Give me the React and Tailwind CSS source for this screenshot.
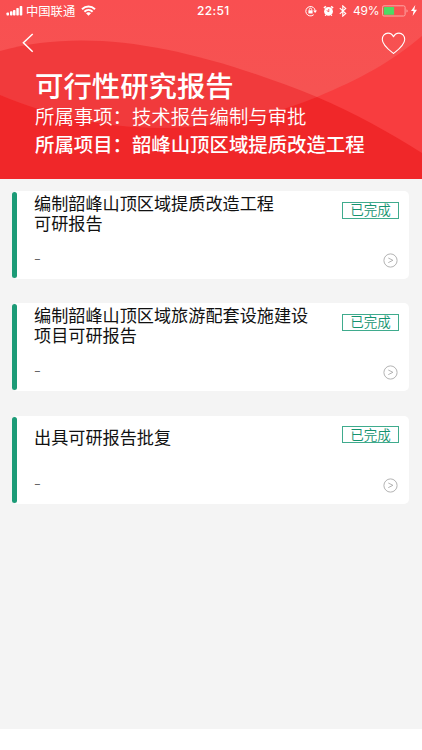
const tasks = [
  { id: 1, title: '编制韶峰山顶区域提质改造工程\n可研报告' },
  { id: 2, title: '编制韶峰山顶区域旅游配套设施建设\n项目可研报告' },
  { id: 3, title: '出具可研报告批复' },
];

function HeaderWaves() {
  return (
    <svg className="absolute inset-0 h-full w-full" viewBox="0 0 422 179" preserveAspectRatio="none" aria-hidden="true">
      <defs>
        <linearGradient id="sky" x1="0" y1="0" x2="0" y2="1">
          <stop offset="0" stopColor="#f94f51" />
          <stop offset="0.5" stopColor="#f65352" />
        </linearGradient>
        <clipPath id="hillClip">
          <path d="M0 51C95 25 200 50 317 97C355 113 390 133 422 153V179H0Z" />
        </clipPath>
      </defs>
      <rect width="422" height="179" fill="url(#sky)" />
      <path d="M0 51C95 25 200 50 317 97C355 113 390 133 422 153V179H0Z" fill="#f13a3c" />
      <path d="M0 95C105 139 215 138 317 97C360 79 393 61 422 36V179H0Z" fill="#f83d3f" />
      <path d="M0 95C105 139 215 138 317 97C360 79 393 61 422 36V179H0Z" fill="#f02729" clipPath="url(#hillClip)" />
    </svg>
  );
}

function StatusBar() {
  return (
    <div className="relative flex h-[22px] items-center justify-between pl-[6px] pr-[5px] text-white">
      <div className="flex items-center">
        <svg width="17" height="10" viewBox="0 0 17 10" fill="currentColor">
          <rect x="0.5" y="6.5" width="2.5" height="3" rx=".7" />
          <rect x="4" y="5.2" width="2.5" height="4.3" rx=".7" />
          <rect x="7" y="4" width="2.5" height="5.5" rx=".7" />
          <rect x="10.3" y="2" width="2.5" height="7.5" rx=".7" />
          <rect x="13.7" y="0" width="2.6" height="9.5" rx=".7" />
        </svg>
        <span className="ml-[3px] text-[12.3px] leading-[22px]">中国联通</span>
        <svg className="-mt-px ml-[6px]" width="15" height="11" viewBox="0 0 15 11" fill="none" stroke="currentColor" strokeWidth="2">
          <path d="M1 4.2C4.8.5 10.2.5 14 4.2" />
          <path d="M3.4 6.7C5.8 4.4 9.2 4.4 11.6 6.7" />
          <path d="M7.5 10.7L5 8.2C6.4 6.9 8.6 6.9 10 8.2Z" fill="currentColor" stroke="none" />
        </svg>
      </div>
      <span className="absolute left-[197px] font-['Inter','Liberation_Sans',sans-serif] text-[12px] font-medium leading-[22px] tracking-[0.35px]">22:51</span>
      <div className="-mt-px flex items-center">
        <svg className="mr-[5px]" width="12" height="12" viewBox="0 0 12 12" fill="none" stroke="currentColor">
          <path d="M8.7 9.7A4.7 4.7 0 1 1 10.2 5.8" strokeWidth="1" />
          <path d="M8.2 5.4H12L10.1 8Z" fill="currentColor" stroke="none" />
          <rect x="3.4" y="5.3" width="4.2" height="3.2" fill="currentColor" stroke="none" />
          <path d="M4.3 5.5V4.4A1.2 1.2 0 0 1 6.7 4.4V5.5" strokeWidth=".9" />
        </svg>
        <svg className="ml-[1px]" width="11" height="12" viewBox="0 0 11 12" fill="none" stroke="currentColor">
          <circle cx="5.5" cy="6.4" r="4.4" fill="currentColor" stroke="none" />
          <path d="M.9 3L2.9 1.3M10.1 3L8.1 1.3" strokeWidth="1.6" />
          <path d="M2.8 10L2 11M8.2 10L9 11" strokeWidth="1" />
          <path d="M5.8 3.9V6.7L3.7 5.6" stroke="#f65052" strokeWidth=".9" />
        </svg>
        <svg className="ml-[5px]" width="8" height="12" viewBox="0 0 8 12" fill="none" stroke="currentColor" strokeWidth="1.15">
          <path d="M.8 3.2L6.7 8.6L3.8 11.1V.9L6.7 3.4L.8 8.8" />
        </svg>
        <span className="ml-[6px] w-[26px] whitespace-nowrap font-['Inter','Liberation_Sans',sans-serif] text-[12px] leading-[22px] tracking-[-0.2px]">49%</span>
        <svg className="ml-[2.5px]" width="27" height="12" viewBox="0 0 27 12">
          <rect x=".5" y=".8" width="22.6" height="10.2" rx="1.5" fill="none" stroke="#fca7a5" />
          <rect x="1.8" y="2.1" width="10.3" height="7.6" rx=".5" fill="#4dda64" />
          <path d="M24.5 4.2C26 4.6 26 7.2 24.5 7.6Z" fill="#fca7a5" />
        </svg>
        <svg className="ml-[2.5px]" width="6" height="11" viewBox="0 0 6 11" fill="currentColor">
          <path d="M4.3 0L0 6H2.6L1.6 11L6 4.7H3.3Z" />
        </svg>
      </div>
    </div>
  );
}

function TaskCard({ title }) {
  return (
    <article className="flex h-[88px] rounded-[5px] bg-white">
      <div className="my-px ml-[0.4px] w-[4.6px] shrink-0 rounded-full bg-[#1c9b77]" />
      <div className="flex min-w-0 flex-1 flex-col pl-[17px]">
        <div className="flex h-[43px] items-center">
          <h2 className="whitespace-pre text-[17.15px] font-normal leading-[20px] text-[#111]">{title}</h2>
        </div>
        <span className="mt-[13px] w-[4px] origin-left scale-x-[1.4] text-[14px] leading-[20px] text-[#666]">-</span>
      </div>
      <div className="mr-[10px] flex w-[58px] shrink-0 flex-col items-end pt-[10.6px]">
        <span className="flex h-[17px] w-[57px] items-center justify-center border border-[#3fab8d] pb-px text-[13.5px] font-[350] leading-[15px] text-[#159370]">已完成</span>
        <svg className="mr-px mt-[34.4px]" width="15" height="15" viewBox="0 0 15 15" fill="none" stroke="#aaa">
          <circle cx="7.5" cy="7.5" r="6.6" strokeWidth=".9" />
          <path d="M5.3 5L9.9 7.3L5.3 9.6" strokeWidth=".9" />
        </svg>
      </div>
    </article>
  );
}

export default function App() {
  return (
    <div className="h-[750px] w-[422px] overflow-hidden bg-white font-['Noto_Sans_CJK_SC',sans-serif]">
      <div className="h-[729px] bg-[#f4f4f4]">
        <header className="relative h-[179px]">
          <HeaderWaves />
          <StatusBar />
          <nav className="relative flex h-[44px] items-start justify-between pl-[22px] pr-[16px] text-white">
            <svg className="mt-[11px]" width="12" height="20" viewBox="0 0 12 20" fill="none" stroke="currentColor" strokeWidth="1.5">
              <path d="M10.7 1L1.4 9.8L10.7 18.7" />
            </svg>
            <svg className="mt-[10px]" width="25" height="23" viewBox="0 0 25 23" fill="none" stroke="currentColor" strokeWidth="1.1">
              <path d="M12.5 21.5C9 18.7 1.3 13 1.3 7.4C1.3 3.7 3.9 1.1 7 1.1C9.6 1.1 11.6 2.8 12.5 4.8C13.4 2.8 15.4 1.1 18 1.1C21.1 1.1 23.7 3.7 23.7 7.4C23.7 13 16 18.7 12.5 21.5Z" strokeLinejoin="round" />
            </svg>
          </nav>
          <div className="relative whitespace-nowrap pl-[35px] text-white">
            <h1 className="h-[37px] text-[28.4px] font-medium leading-[38px]">可行性研究报告</h1>
            <p className="h-[26px] text-[19.4px] font-[350] leading-[26px]">所属事项：技术报告编制与审批</p>
            <p className="h-[30px] text-[19.4px] font-medium leading-[30px]">所属项目：韶峰山顶区域提质改造工程</p>
          </div>
        </header>
        <main className="flex flex-col gap-[24.4px] pl-[12px] pr-[13px] pt-[12px]">
          {tasks.map((task) => (
            <TaskCard key={task.id} title={task.title} />
          ))}
        </main>
      </div>
    </div>
  );
}
